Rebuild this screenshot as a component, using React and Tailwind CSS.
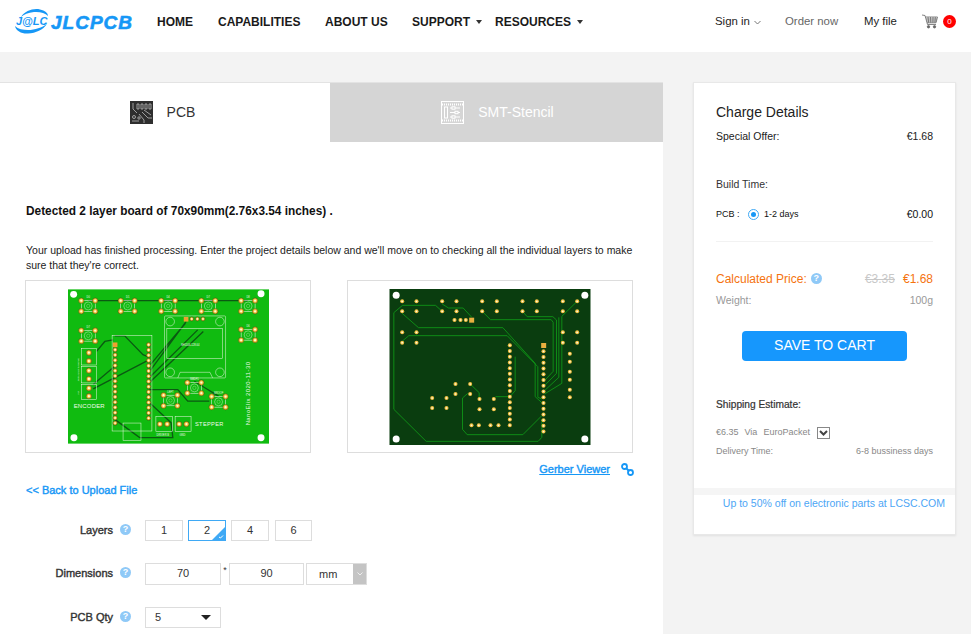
import React from "react";

const font = { fontFamily: '"Liberation Sans", Arial, sans-serif' };

const Help = ({ className = "" }) => (
  <span className={`inline-flex w-[11px] h-[11px] rounded-full bg-[#8fc9f7] text-white text-[9px] font-bold items-center justify-center leading-none ${className}`}>
    ?
  </span>
);

const Caret = () => (
  <span className="inline-block ml-[6px] mb-[2px] w-0 h-0 border-x-[3.5px] border-x-transparent border-t-[4px] border-t-[#333]" />
);

function Logo() {
  return (
    <div className="flex items-center">
      <div className="relative w-[36px] h-[26px]">
        <svg width="36" height="26" viewBox="0 0 36 26" className="absolute left-0 top-0">
          <path d="M6 8 C10 2 18 -1 25 0.500 C30 1.500 33 4 33 7 C30 4 25 2.500 19 3 C13 3.500 9 5.500 6 8Z" fill="#1697f6" />
          <path d="M0 17 C1 22 7 25 13 24.500 C21 24 28 21 32 15 C27 18.500 20 21 13 21 C8 21 3 20 0 17Z" fill="#1697f6" />
        </svg>
        <span className="absolute left-[1px] top-[6px] text-[11px] leading-[12px] font-bold italic text-[#1697f6] whitespace-nowrap">J@LC</span>
      </div>
      <span className="text-[19px] leading-none font-bold italic text-[#1697f6] tracking-[1px] [-webkit-text-stroke:0.6px_#1697f6]">JLCPCB</span>
    </div>
  );
}

function CartIcon() {
  return (
    <svg width="16" height="15" viewBox="0 0 16 15" fill="none" stroke="#666" strokeWidth="0.8">
      <path d="M0 1 L3 1.500 L5.500 10.500 L14 10.500" />
      <path d="M3.400 3 L15.500 3 L14 8.800 L5 8.800" />
      <path d="M6 3 L6.700 8.800 M8.500 3 L8.800 8.800 M11 3 L10.900 8.800 M13.300 3 L12.900 8.800 M4 5 L15 5 M4.600 7 L14.500 7" />
      <circle cx="6.500" cy="12.800" r="1.200" fill="#666" />
      <circle cx="12.500" cy="12.800" r="1.200" fill="#666" />
    </svg>
  );
}

function PcbIcon() {
  return (
    <svg width="23" height="23" viewBox="0 0 23 23" className="block">
      <rect width="23" height="23" fill="#2e2e2e" />
      <g stroke="#bbb" strokeWidth="0.8" fill="none">
        <path d="M3 2 L3 8 L7 12 M7 3 h2 v5 h-2z M11 3 h2 v5 h-2z M15 3 h2 v5 h-2z M19 3 h2 v5 h-2z" />
        <path d="M12 11 L18 17 L22 17 M14 9 L21 14 M9 13 L14 19 L14 22" />
        <circle cx="4" cy="16" r="1.500" />
        <circle cx="9" cy="17" r="1.200" />
        <path d="M2 20 h7" />
      </g>
    </svg>
  );
}

function StencilIcon() {
  return (
    <svg width="23" height="23" viewBox="0 0 23 23" fill="none" stroke="#fff" strokeWidth="1" className="block">
      <rect x="0.500" y="0.500" width="22" height="22" />
      <path d="M1 3.500 h21 M1 19.500 h21" strokeDasharray="1 1" strokeWidth="2" />
      <rect x="3.500" y="6" width="3" height="11" />
      <path d="M9 7 h10 M9 11.500 h10 M9 16 h10" />
      <rect x="11" y="5.800" width="3" height="2.400" fill="#d5d5d5" />
      <rect x="14" y="10.300" width="3" height="2.400" fill="#d5d5d5" />
      <rect x="11" y="14.800" width="3" height="2.400" fill="#d5d5d5" />
    </svg>
  );
}

const TopPad = ({ x, y, r = 8 }) => (
  <g>
    <circle cx={x} cy={y} r={r} fill="#f5c33b" stroke="#3a3a10" strokeWidth="1.500" />
    <circle cx={x} cy={y} r={r * 0.42} fill="#fff8d8" />
  </g>
);

const Button = ({ x, y, label }) => (
  <g>
    <rect x={x - 21} y={y - 16} width="42" height="32" fill="none" stroke="#fff" strokeWidth="1.500" />
    <circle cx={x} cy={y} r="12" fill="none" stroke="#cfeec8" strokeWidth="1.500" />
    <circle cx={x} cy={y} r="5" fill="none" stroke="#cfeec8" strokeWidth="1" />
    {[[-21, -16], [21, -16], [-21, 16], [21, 16]].map(([a, b]) => (
      <TopPad key={`${a}${b}`} x={x + a} y={y + b} />
    ))}
    {label && (
      <text x={x} y={y - 24} fontSize="8" fill="#e8f8e0" textAnchor="middle" fontFamily="Liberation Sans">{label}</text>
    )}
  </g>
);

const headerPins = Array.from({ length: 15 }, (_, i) => 185 + i * 15.800);

function PcbTop() {
  return (
    <svg width="201" height="155" viewBox="24 18 606 465" className="block ml-[1px]">
      <rect x="24" y="18" width="606" height="465" fill="#10bb10" />
      <g fill="none" stroke="#0a5a12" strokeWidth="4">
        <path d="M85 52 H567" />
        <path d="M165 158 H195 L250 215 L268 222" />
        <path d="M110 205 L135 175 L160 170" />
        <path d="M100 318 L265 232 M100 305 L165 250 M268 268 L380 115 M268 250 L378 120 M268 285 L415 140 M268 300 L432 145" />
        <path d="M270 320 H355 L385 355 H450" />
        <path d="M270 360 L335 420 L340 465 H240 L165 410" />
        <path d="M405 295 L445 320 L478 340" />
      </g>
      <g fill="none" stroke="#f4f8ec" strokeWidth="1.500">
        <rect x="315" y="98" width="184" height="187" rx="3" />
        <rect x="322" y="136" width="168" height="90" />
        <circle cx="332" cy="115" r="13" />
        <circle cx="482" cy="115" r="13" />
        <circle cx="332" cy="268" r="13" />
        <circle cx="482" cy="268" r="13" />
        <path d="M355 285 L362 268 H452 L460 285" />
        <rect x="157" y="157" width="120" height="288" />
        <rect x="190" y="421" width="54" height="52" />
        <rect x="65" y="196" width="45" height="50" />
        <rect x="65" y="250" width="45" height="50" />
        <rect x="65" y="304" width="45" height="46" />
        <rect x="289" y="402" width="50" height="44" />
        <rect x="347" y="402" width="48" height="44" />
      </g>
      {[[85, 68, "D0"], [204, 68, "D1"], [326, 68, "D4"], [447, 68, "D7"], [567, 68, "D8"], [567, 155, "D6"], [85, 158, "D7"], [405, 315, "SMDF1"], [478, 357, "SROOF"], [333, 353, "LEFT"]].map(([x, y, l]) => (
        <Button key={`${x}${y}`} x={x} y={y} label={l} />
      ))}
      {headerPins.map((y) => (
        <g key={y}>
          <TopPad x={166} y={y + 15} r={6.500} />
          <TopPad x={267} y={y} r={6.500} />
        </g>
      ))}
      <rect x="159" y="178" width="14" height="14" fill="#f0a030" />
      <rect x="373" y="101" width="14" height="14" fill="#f0a030" />
      {[397, 414, 431].map((x) => <TopPad key={x} x={x} y={107} r={6} />)}
      {[[87, 209], [87, 234], [87, 263], [87, 288], [87, 316], [87, 340], [301, 424], [323, 424], [359, 424], [381, 424]].map(([x, y]) => (
        <TopPad key={`${x}${y}`} x={x} y={y} r={8} />
      ))}
      <g fill="#f0fae8" fontFamily="Liberation Sans">
        <text x="41" y="377" fontSize="18" letterSpacing="0.600">ENCODER</text>
        <text x="407" y="430" fontSize="17" letterSpacing="1">STEPPER</text>
        <text x="291" y="460" fontSize="8">DRIVER B</text>
        <text x="360" y="460" fontSize="8">GND</text>
        <text x="365" y="190" fontSize="8">SH1106-128-64</text>
        <text transform="translate(574 428) rotate(-90)" fontSize="18" letterSpacing="1.300">NanoElix 2020-11-30</text>
        <text transform="translate(56 295) rotate(-90)" fontSize="7">SERIAL ULTRASONIC</text>
        <text transform="translate(56 335) rotate(-90)" fontSize="7">INT</text>
      </g>
      {[[41, 33], [606, 31], [42, 465], [606, 465]].map(([x, y]) => (
        <circle key={`${x}${y}`} cx={x} cy={y} r="10.500" fill="#fff" />
      ))}
    </svg>
  );
}

const BottomPad = ({ x, y }) => (
  <g>
    <circle cx={x} cy={y} r="6" fill="#f0c040" />
    <circle cx={x} cy={y} r="2.600" fill="#fff8e0" />
  </g>
);

const bottomPads = [
  [53, 52], [96, 52], [173, 52], [216, 52], [293, 52], [337, 52], [414, 52], [457, 52], [535, 52], [578, 52],
  [53, 82], [96, 82], [173, 82], [216, 82], [293, 82], [337, 82], [414, 82], [457, 82], [535, 82], [578, 82],
  [53, 145], [96, 145], [535, 145], [578, 145], [53, 176], [96, 176], [535, 176], [578, 176],
  [556, 209], [556, 233], [556, 263], [556, 287], [556, 317], [556, 340],
  [213, 300], [257, 300], [213, 330], [257, 330], [143, 342], [186, 342], [143, 372], [186, 372],
  [285, 345], [328, 345], [285, 376], [328, 376], [261, 424], [283, 424], [318, 424], [342, 424],
  [210, 108], [228, 108], [244, 108],
];

function PcbBottom() {
  return (
    <svg width="202" height="156" viewBox="15 15 603 468" className="block">
      <rect x="15" y="15" width="603" height="468" fill="#0a3d0f" />
      <g fill="none" stroke="#109a18" strokeWidth="2.500">
        <path d="M53 64 H153 L173 82 M173 60 L192 72 H236 L262 100" />
        <path d="M53 65 L28 86 V376 L125 472 H461 L472 460 V405" />
        <path d="M53 88 L102 131 H355 L452 238 V338 L472 356" />
        <path d="M55 170 L73 155 H368 L460 248 V340 L472 345" />
        <path d="M293 82 L318 107 H500 L506 115 V262 L480 290" />
        <path d="M414 82 L428 98 H505 L516 108 V268 L480 305" />
        <path d="M578 52 L532 97 V298 L480 330" />
        <path d="M523 100 V280 L480 320" />
        <path d="M392 218 V320 L378 336" />
        <path d="M257 300 L284 326 V345 M250 328 L234 342 V436 L248 452 H415 L472 395" />
        <path d="M333 338 H372" />
      </g>
      {bottomPads.map(([x, y]) => <BottomPad key={`${x}${y}`} x={x} y={y} />)}
      {Array.from({ length: 15 }, (_, i) => 184 + i * 17.100).map((y) => <BottomPad key={y} x={376} y={y} />)}
      {Array.from({ length: 15 }, (_, i) => 202 + i * 17.200).map((y) => <BottomPad key={y} x={477} y={y} />)}
      <rect x="470" y="177" width="15" height="15" fill="#e8b040" />
      <rect x="254" y="101" width="15" height="15" fill="#e8b040" />
      {[[35, 34], [601, 34], [35, 465], [601, 465]].map(([x, y]) => (
        <circle key={`${x}${y}`} cx={x} cy={y} r="10.500" fill="#fff" />
      ))}
    </svg>
  );
}

const LayerBtn = ({ w, active, children }) => (
  <div className={`relative h-[21px] flex items-center justify-center text-[11px] text-[#333] border overflow-hidden ${w} ${active ? "border-[#3fa9f5]" : "border-[#ddd]"}`}>
    {children}
    {active && (
      <svg width="13" height="13" viewBox="0 0 13 13" className="absolute right-0 bottom-0">
        <path d="M13 0 V13 H0Z" fill="#3fa9f5" />
        <path d="M7 10 L8.500 11 L11 8.500" stroke="#fff" strokeWidth="1" fill="none" />
      </svg>
    )}
  </div>
);

const Row = ({ label, className, children }) => (
  <div className={`flex items-center ${className}`}>
    <div className="w-[113px] text-right text-[11px] text-[#333] [-webkit-text-stroke:0.4px_#333]">{label}</div>
    <Help className="ml-[7px] mb-[2px]" />
    <div className="ml-[14px] flex items-center">{children}</div>
  </div>
);

export default function App() {
  return (
    <div className="w-[971px] h-[634px] overflow-hidden bg-[#f3f3f3] text-[#222]" style={font}>
      <header className="h-[52px] bg-white flex items-center pb-[8px]">
        <div className="ml-[15px] w-[142px]"><Logo /></div>
        <nav className="flex items-center text-[12px] font-bold text-[#1a1a1a]">
          <a className="w-[61px]">HOME</a>
          <a className="w-[107px]">CAPABILITIES</a>
          <a className="w-[87px]">ABOUT US</a>
          <a className="w-[83px]">SUPPORT<Caret /></a>
          <a className="w-[220px]">RESOURCES<Caret /></a>
        </nav>
        <div className="flex items-center text-[11.400px]">
          <a className="w-[70px] text-[#222] flex items-center">
            Sign in
            <svg width="7" height="5" viewBox="0 0 7 5" fill="none" stroke="#777" className="ml-[4px] mt-[2px]"><path d="M0.500 1 L3.500 4 L6.500 1" /></svg>
          </a>
          <a className="w-[79px] text-[#666]">Order now</a>
          <a className="w-[58px] text-[#222]">My file</a>
          <CartIcon />
          <span className="ml-[5px] w-[13px] h-[13px] rounded-full bg-[#f00] text-white text-[8px] flex items-center justify-center">0</span>
        </div>
      </header>

      <main className="flex pt-[30px]">
        <section className="w-[663px] h-[552px] bg-white border-t border-[#e3e3e3] shrink-0">
          <div className="flex h-[59px]">
            <div className="w-[330px] pr-[5px] flex items-center justify-center bg-white">
              <PcbIcon />
              <span className="ml-[14px] text-[14px] text-[#333]">PCB</span>
            </div>
            <div className="w-[333px] pl-[2px] flex items-center justify-center bg-[#d5d5d5]">
              <StencilIcon />
              <span className="ml-[14px] text-[14px] text-white">SMT-Stencil</span>
            </div>
          </div>

          <div className="px-[26px]">
            <h2 className="mt-[62px] text-[11.850px] leading-[14px] font-bold text-[#111]">Detected 2 layer board of 70x90mm(2.76x3.54 inches) .</h2>
            <p className="mt-[25px] w-[612px] text-[10.500px] leading-[15px] text-[#222]">
              Your upload has finished processing. Enter the project details below and we'll move on to checking all the individual layers to make sure that they're correct.
            </p>
            <div className="mt-[7px] -ml-[1px] flex gap-[36px]">
              <div className="w-[286px] h-[173px] border border-[#ddd] flex items-center justify-center"><PcbTop /></div>
              <div className="w-[286px] h-[173px] border border-[#ddd] flex items-center justify-center"><PcbBottom /></div>
            </div>
            <div className="mt-[8px] w-[608px] flex justify-end items-center">
              <a className="text-[11px] text-[#1697f6] underline [-webkit-text-stroke:0.4px_#1697f6]">Gerber Viewer</a>
              <svg width="13" height="13" viewBox="0 0 13 13" fill="none" stroke="#1697f6" strokeWidth="1.800" className="ml-[11px]">
                <circle cx="3.500" cy="3.500" r="2.500" />
                <circle cx="9.500" cy="9.500" r="2.500" />
                <path d="M5 5 L8 8" />
              </svg>
            </div>
            <a className="block mt-[6px] text-[11px] leading-[12px] text-[#1697f6] [-webkit-text-stroke:0.4px_#1697f6]">&lt;&lt; Back to Upload File</a>
          </div>

          <Row label="Layers" className="mt-[24px]">
            <LayerBtn w="w-[38px]">1</LayerBtn>
            <LayerBtn w="w-[38px] ml-[5px]" active>2</LayerBtn>
            <LayerBtn w="w-[38px] ml-[5px]">4</LayerBtn>
            <LayerBtn w="w-[37px] ml-[6px]">6</LayerBtn>
          </Row>
          <Row label="Dimensions" className="mt-[22px]">
            <div className="w-[76px] h-[22px] border border-[#ddd] flex items-center justify-center text-[11px] text-[#333]">70</div>
            <span className="w-[8px] text-center text-[9px] text-[#333] mb-[6px]">*</span>
            <div className="w-[75px] h-[22px] border border-[#ddd] flex items-center justify-center text-[11px] text-[#333]">90</div>
            <div className="ml-[2px] w-[61px] h-[22px] border border-[#ddd] flex items-center text-[11px] text-[#333]">
              <span className="ml-[12px] flex-1 mt-[1px]">mm</span>
              <span className="w-[13px] h-full bg-[#c4c4c4] flex items-center justify-center">
                <svg width="6" height="4" viewBox="0 0 6 4" fill="none" stroke="#eee"><path d="M0.500 0.500 L3 3 L5.500 0.500" /></svg>
              </span>
            </div>
          </Row>
          <Row label="PCB Qty" className="mt-[22px]">
            <div className="w-[76px] h-[21px] border border-[#ddd] flex items-center justify-between px-[9px] text-[11px] text-[#333]">
              5
              <span className="w-0 h-0 border-x-[5px] border-x-transparent border-t-[5px] border-t-[#222]" />
            </div>
          </Row>
        </section>

        <aside className="ml-[30px] w-[263px] h-[453px] bg-white border border-[#e8e8e8] shadow-[0_1px_2px_rgba(0,0,0,0.08)] shrink-0 flex flex-col">
          <div className="px-[22px]">
            <h3 className="mt-[21px] text-[14px] leading-[16px] text-[#222]">Charge Details</h3>
            <div className="mt-[10px] flex justify-between text-[10.500px] leading-[12px] text-[#222]">
              <span>Special Offer:</span><span>€1.68</span>
            </div>
            <div className="mt-[36px] text-[10.500px] leading-[12px] text-[#333]">Build Time:</div>
            <div className="mt-[17px] pb-[18px] border-b border-[#f2f2f2] flex items-center text-[9px] text-[#111]">
              <span className="w-[32px]">PCB :</span>
              <span className="w-[11px] h-[11px] rounded-full border border-[#3fa9f5] flex items-center justify-center">
                <span className="w-[5px] h-[5px] rounded-full bg-[#1697f6]" />
              </span>
              <span className="ml-[5px] flex-1">1-2 days</span>
              <span className="text-[10.500px]">€0.00</span>
            </div>
            <div className="mt-[30px] flex items-center text-[12px] leading-[14px] text-[#f5730f]">
              <span>Calculated Price:</span>
              <Help className="ml-[4px]" />
              <span className="ml-auto text-[#c8c8c8] line-through">€3.35</span>
              <span className="ml-[8px]">€1.68</span>
            </div>
            <div className="mt-[8px] flex justify-between text-[10.500px] leading-[12px] text-[#999]">
              <span>Weight:</span><span>100g</span>
            </div>
            <button className="block mx-auto mt-[25px] w-[165px] h-[30px] rounded-[4px] bg-[#1697fd] text-white text-[14px]">SAVE TO CART</button>
            <div className="mt-[38px] text-[10.200px] leading-[12px] text-[#333] [-webkit-text-stroke:0.2px_#333]">Shipping Estimate:</div>
            <div className="mt-[15px] flex items-center text-[9px] text-[#888]">
              <span>€6.35</span>
              <span className="ml-[6px]">Via</span>
              <span className="ml-[6px]">EuroPacket</span>
              <span className="ml-[7px] w-[13px] h-[12px] border border-[#888] flex items-center justify-center">
                <svg width="9" height="6" viewBox="0 0 9 6" fill="none" stroke="#444" strokeWidth="2"><path d="M1 1 L4.500 4.500 L8 1" /></svg>
              </span>
            </div>
            <div className="mt-[7px] flex justify-between text-[9px] leading-[11px] text-[#888]">
              <span>Delivery Time:</span><span>6-8 bussiness days</span>
            </div>
          </div>
          <div className="mt-[31px] h-[7px] bg-[#f5f5f5]" />
          <a className="block mt-[2px] mr-[10px] text-right text-[10.500px] leading-[13px] text-[#4da6f5]">Up to 50% off on electronic parts at LCSC.COM</a>
        </aside>
      </main>
    </div>
  );
}
